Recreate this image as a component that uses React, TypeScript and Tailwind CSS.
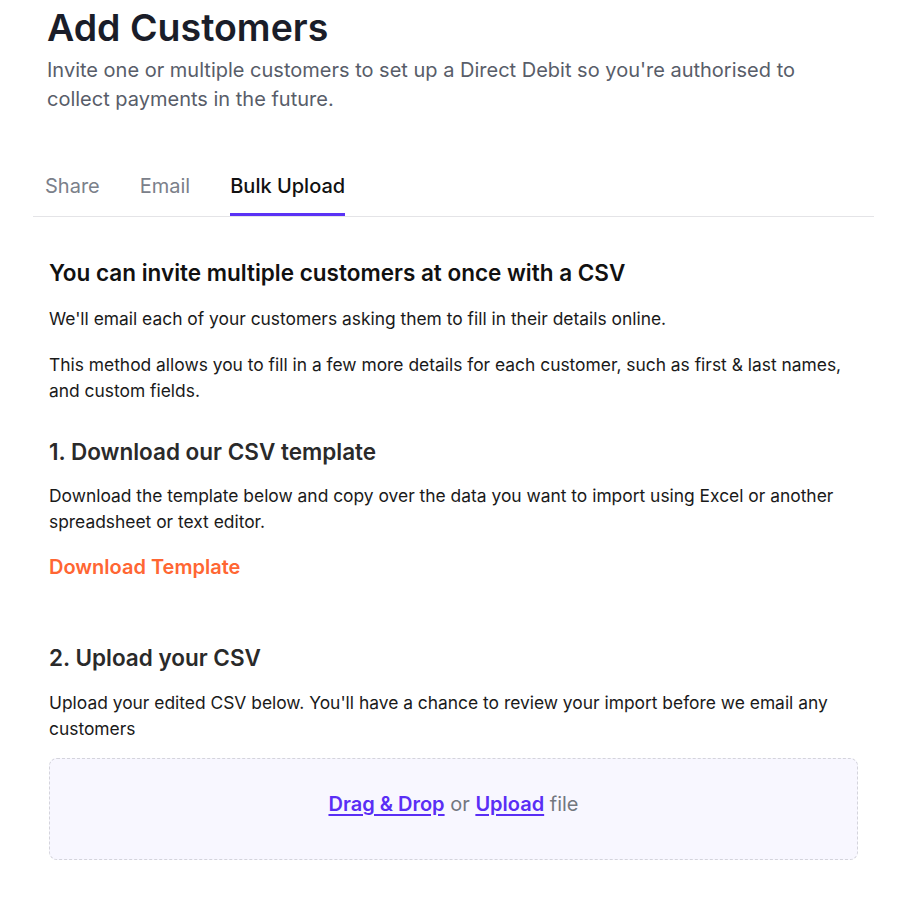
export default function App() {
  const tabs = ['Share', 'Email', 'Bulk Upload'];
  const active = 'Bulk Upload';

  return (
    <div className="min-h-screen bg-white font-['Inter','Liberation_Sans',sans-serif] text-[#1a1a1a]">
      <div className="ml-[33px] mr-[32px] pt-2">
        <div className="pl-[14px]">
          <h1 className="text-[37.5px] leading-10 font-semibold text-[#1a1d29]">Add Customers</h1>
          <p className="mt-2 text-[20px] leading-[29px] text-[#585d69] max-w-[760px]">
            Invite one or multiple customers to set up a Direct Debit so you're authorised to collect payments in the future.
          </p>
        </div>

        <div className="mt-[58px] flex gap-10 border-b border-[#e4e4e7] pl-3">
          {tabs.map((t) => (
            <button
              key={t}
              className={
                t === active
                  ? 'border-b-[3px] border-[#5a32f5] pb-[13px] text-[20px] leading-7 font-medium text-[#111111]'
                  : 'border-b-[3px] border-transparent pb-[13px] text-[20px] leading-7 text-[#7b808a]'
              }
            >
              {t}
            </button>
          ))}
        </div>

        <div className="px-4 pt-[42px]">
          <h2 className="text-[22.5px] leading-7 font-semibold text-[#111111]">
            You can invite multiple customers at once with a CSV
          </h2>
          <p className="mt-[19px] text-[17.4px] leading-[26px]">
            We'll email each of your customers asking them to fill in their details online.
          </p>
          <p className="mt-5 text-[17.4px] leading-[26px]">
            This method allows you to fill in a few more details for each customer, such as first &amp; last names, and custom fields.
          </p>

          <h3 className="mt-[33px] text-[22.5px] leading-[30px] font-semibold text-[#2a2a2a]">
            1. Download our CSV template
          </h3>
          <p className="mt-4 text-[17.4px] leading-[26px]">
            Download the template below and copy over the data you want to import using Excel or another spreadsheet or text editor.
          </p>
          <a href="#" className="mt-[18px] block text-[20px] leading-7 font-semibold text-[#ff6633]">
            Download Template
          </a>

          <h3 className="mt-[62px] text-[22.5px] leading-[30px] font-semibold text-[#2a2a2a]">
            2. Upload your CSV
          </h3>
          <p className="mt-[17px] text-[17.4px] leading-[26px]">
            Upload your edited CSV below. You'll have a chance to review your import before we email any customers
          </p>

          <div className="mt-4 flex h-[102px] items-center justify-center rounded-lg border border-dashed border-[#d4d4dc] bg-[#f8f7ff] pb-[10px] text-[20px] leading-[30px] text-[#737780]">
            <span>
              <a href="#" className="font-semibold text-[#5a2ef5] underline decoration-2 underline-offset-[3px]">Drag &amp; Drop</a>
              {' or '}
              <a href="#" className="font-semibold text-[#5a2ef5] underline decoration-2 underline-offset-[3px]">Upload</a>
              {' file'}
            </span>
          </div>
        </div>
      </div>
    </div>
  );
}
